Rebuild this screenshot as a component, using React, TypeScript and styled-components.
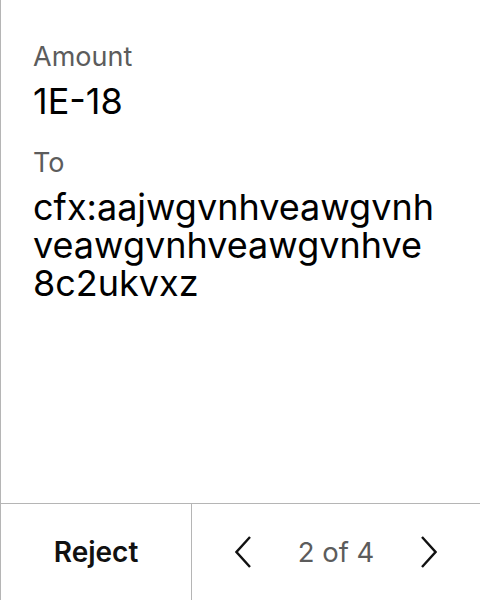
import styled, { createGlobalStyle } from 'styled-components';

const GlobalStyle = createGlobalStyle`
  html, body {
    margin: 0;
    padding: 0;
    background: #ffffff;
  }
  body {
    font-family: Inter, "Noto Sans", sans-serif;
  }
`;

export default function App() {
  return (
    <>
      <GlobalStyle />
      <Screen>
        <Details>
          <Field>
            <Label>Amount</Label>
            <Value>1E-18</Value>
          </Field>
          <Field>
            <Label>To</Label>
            <Value>cfx:aajwgvnhveawgvnhveawgvnhveawgvnhve8c2ukvxz</Value>
          </Field>
        </Details>

        <Footer>
          <RejectButton>Reject</RejectButton>
          <Pager>
            <Arrow aria-label='previous'>
              <svg width='16' height='32' viewBox='0 0 16 32' fill='none'>
                <path d='M15 1 L1.5 16 L15 31' stroke='#111' strokeWidth='2.4' />
              </svg>
            </Arrow>
            <PageCount>2 of 4</PageCount>
            <Arrow aria-label='next'>
              <svg width='16' height='32' viewBox='0 0 16 32' fill='none'>
                <path d='M1 1 L14.5 16 L1 31' stroke='#111' strokeWidth='2.4' />
              </svg>
            </Arrow>
          </Pager>
        </Footer>
      </Screen>
    </>
  );
}

const Screen = styled.div`
  width: 480px;
  height: 600px;
  box-sizing: border-box;
  border-left: 1px solid #b5b5b5;
  display: flex;
  flex-direction: column;
`;

const Details = styled.div`
  flex: 1;
  padding: 40px 42px 0 32px;
  display: flex;
  flex-direction: column;
  gap: 26px;
`;

const Field = styled.div`
  display: flex;
  flex-direction: column;
  gap: 8px;
`;

const Label = styled.div`
  font-size: 27px;
  line-height: 34px;
  color: #5c5c5c;
`;

const Value = styled.div`
  font-size: 36px;
  line-height: 38px;
  color: #000;
  word-break: break-all;
`;

const Footer = styled.div`
  height: 96px;
  border-top: 1px solid #b5b5b5;
  display: grid;
  grid-template-columns: 191px 1fr;
`;

const RejectButton = styled.button`
  border: none;
  border-right: 1px solid #b5b5b5;
  background: none;
  font-family: Inter, "Noto Sans", sans-serif;
  font-size: 28px;
  font-weight: 600;
  color: #111;
  padding: 0;
`;

const Pager = styled.div`
  display: flex;
  align-items: center;
  justify-content: center;
  gap: 47px;
`;

const Arrow = styled.button`
  border: none;
  background: none;
  padding: 0;
  display: flex;
  align-items: center;
`;

const PageCount = styled.div`
  font-size: 27.5px;
  color: #5c5c5c;
`;
